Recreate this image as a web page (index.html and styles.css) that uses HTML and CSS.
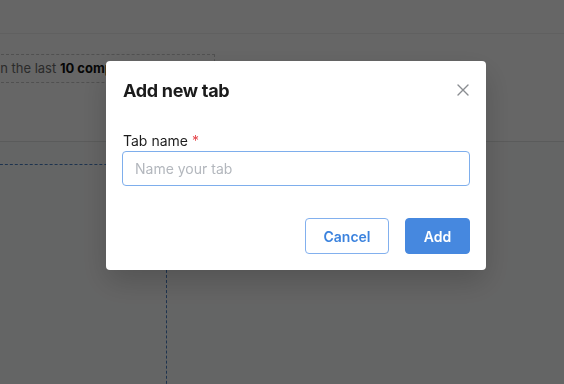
FILE: index.html
```html
<!DOCTYPE html>
<html>
<head>
<meta charset="utf-8">
<link rel="stylesheet" href="styles.css">
</head>
<body>
<div class="page">
  <header class="topbar"></header>
  <section class="filters">
    <div class="filter-box"><span class="muted">in the last </span><b>10 completed runs</b></div>
  </section>
  <section class="board">
    <div class="drop-zone"></div>
  </section>
</div>

<div class="overlay">
  <div class="modal" role="dialog" aria-labelledby="modal-title">
    <div class="modal-head">
      <h2 id="modal-title" class="modal-title">Add new tab</h2>
      <button class="close" aria-label="Close">
        <svg width="12" height="12" viewBox="0 0 12 12"><path d="M1 1L11 11M11 1L1 11" stroke="#8a8d91" stroke-width="1.4" stroke-linecap="round" fill="none"/></svg>
      </button>
    </div>
    <label class="field-label" for="tabname">Tab name <span class="req">*</span></label>
    <input id="tabname" class="field-input" type="text" placeholder="Name your tab">
    <div class="actions">
      <button class="btn btn-outline">Cancel</button>
      <button class="btn btn-primary">Add</button>
    </div>
  </div>
</div>
</body>
</html>
```

FILE: styles.css
```css
* { box-sizing: border-box; }
html, body { margin: 0; padding: 0; }
body {
  width: 564px;
  height: 384px;
  overflow: hidden;
  font-family: Inter, "Noto Sans", "Liberation Sans", sans-serif;
  background: #fafcfb;
}
.page {
  display: flex;
  flex-direction: column;
  height: 384px;
  overflow: hidden;
}
.topbar {
  height: 34px;
  background: #ffffff;
  border-bottom: 1px solid #f0f0f0;
  flex: none;
}
.filters {
  height: 108px;
  background: #ffffff;
  border-bottom: 1px solid #e2e4e3;
  padding-top: 20px;
  flex: none;
}
.filter-box {
  margin-left: -200px;
  width: 415px;
  height: 29px;
  border: 1px dashed #c9c9c9;
  font-size: 13px;
  line-height: 27px;
  padding-left: 196px;
  color: #000;
  white-space: nowrap;
  overflow: hidden;
}
.filter-box .muted { color: #6c6c6c; }
.filter-box b { font-weight: 700; color: #111; }
.board {
  flex: 1;
  padding-top: 22px;
  background: #fbfcfc;
}
.drop-zone {
  margin-left: -20px;
  width: 187px;
  height: 240px;
  border-top: 1px dashed #4a7fc4;
  border-right: 1px dashed #4a7fc4;
}

.overlay {
  position: fixed;
  inset: 0;
  background: rgba(0, 0, 0, 0.6);
}
.modal {
  position: absolute;
  left: 106px;
  top: 61px;
  width: 380px;
  height: 209px;
  background: #fff;
  border-radius: 4px;
  box-shadow: 0 12px 30px rgba(0, 0, 0, 0.18);
  padding: 16px;
  display: flex;
  flex-direction: column;
}
.modal-head {
  display: flex;
  align-items: center;
  justify-content: space-between;
  height: 28px;
  padding-left: 1px;
}
.modal-title {
  margin: 0;
  font-size: 18px;
  line-height: 28px;
  font-weight: 700;
  color: #1b1b1b;
  letter-spacing: -0.3px;
}
.close {
  border: 0;
  background: none;
  padding: 0;
  width: 12px;
  height: 12px;
  margin-right: 1px;
  margin-bottom: 2px;
  display: flex;
}
.field-label {
  margin-top: 27px;
  font-size: 14px;
  line-height: 17px;
  color: #1d1d1d;
  padding-left: 1px;
}
.req { color: #e5484d; }
.field-input {
  margin-top: 2px;
  height: 35px;
  width: 100%;
  border: 1px solid #7eaeec;
  border-radius: 4px;
  padding: 0 12px;
  font-family: inherit;
  font-size: 14px;
  color: #222;
  outline: none;
}
.field-input::placeholder { color: #b3b7bd; }
.actions {
  margin-top: auto;
  display: flex;
  justify-content: flex-end;
  gap: 16px;
}
.btn {
  height: 36px;
  border-radius: 4px;
  font-family: inherit;
  font-size: 14px;
  font-weight: 600;
  cursor: pointer;
}
.btn-outline {
  width: 84px;
  background: #fff;
  border: 1px solid #82b0ee;
  color: #3c83de;
}
.btn-primary {
  width: 65px;
  background: #4688df;
  border: 1px solid #4688df;
  color: #fff;
}
```
